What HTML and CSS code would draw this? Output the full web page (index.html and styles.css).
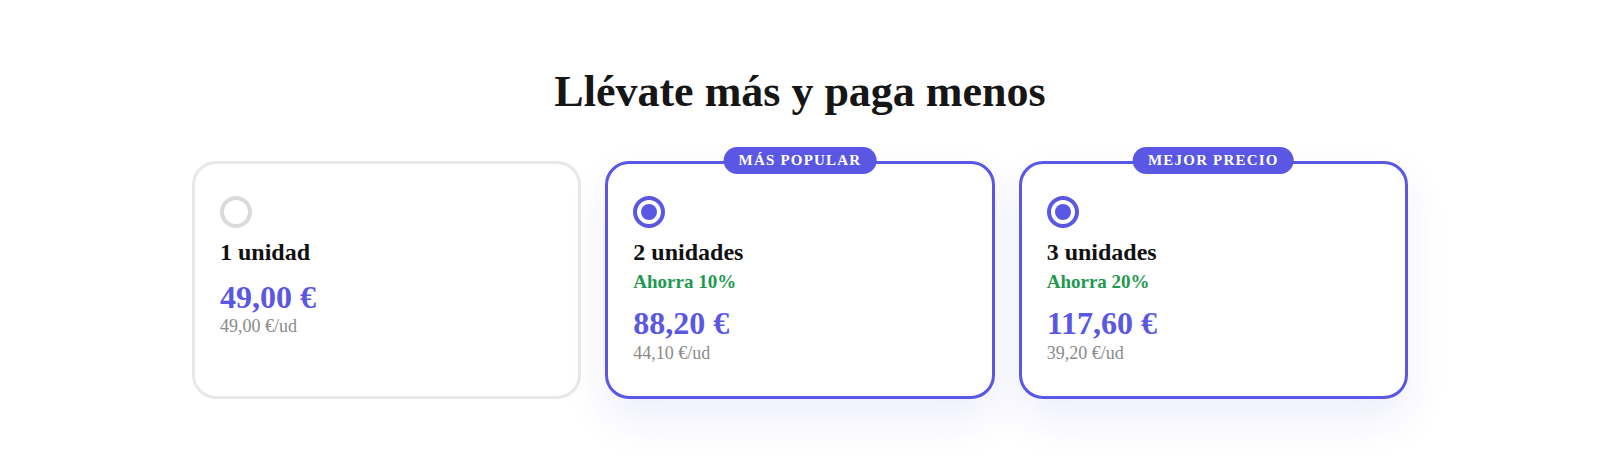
FILE: index.html
```html
<!DOCTYPE html>
<html>
    <head>
        <meta charset="utf-8">
        <meta name="viewport" content="width=device-width, initial-scale=1.0">
        <link rel="stylesheet" href="styles.css">
    </head>
    <body>
        <main class="bundles">
            <h1 class="title">Llévate más y paga menos</h1>
            <div class="options">
                <div class="option">
                    <span class="radio"></span>
                    <p class="qty">1 unidad</p>
                    <p class="price">49,00 €</p>
                    <p class="unit">49,00 €/ud</p>
                </div>
                <div class="option selected">
                    <span class="badge">Más popular</span>
                    <span class="radio"></span>
                    <p class="qty">2 unidades</p>
                    <p class="save">Ahorra 10%</p>
                    <p class="price">88,20 €</p>
                    <p class="unit">44,10 €/ud</p>
                </div>
                <div class="option selected">
                    <span class="badge">Mejor precio</span>
                    <span class="radio"></span>
                    <p class="qty">3 unidades</p>
                    <p class="save">Ahorra 20%</p>
                    <p class="price">117,60 €</p>
                    <p class="unit">39,20 €/ud</p>
                </div>
            </div>
        </main>
    </body>
</html>
```

FILE: styles.css
```css
body {
    margin: 0;
    font-family: "Liberation Serif", "Times New Roman", serif;
    background: #fff;
    color: #111;
}

.bundles {
    padding: 66px 0 70px;
}

.title {
    margin: 0 0 42px;
    text-align: center;
    font-size: 44px;
    line-height: 1.2;
    font-weight: bold;
    color: #161616;
}

.options {
    width: 1216px;
    margin: 0 auto;
    display: grid;
    grid-template-columns: repeat(3, 1fr);
    gap: 24px;
}

.option {
    position: relative;
    padding: 32px 25px;
    border: 3px solid #e8e8e8;
    border-radius: 24px;
    background: #fff;
}

.option.selected {
    border-color: #5a57e4;
    box-shadow: 0 20px 40px rgba(90, 87, 228, 0.1);
}

.badge {
    position: absolute;
    top: -17px;
    left: 50%;
    transform: translateX(-50%);
    padding: 4px 15px;
    border-radius: 999px;
    background: #5a57e4;
    color: #fff;
    font-size: 15px;
    line-height: 19px;
    font-weight: bold;
    text-transform: uppercase;
    letter-spacing: 1.2px;
    white-space: nowrap;
}

.radio {
    display: block;
    box-sizing: border-box;
    width: 32px;
    height: 32px;
    margin-bottom: 10px;
    border: 4px solid #dadada;
    border-radius: 50%;
    position: relative;
}

.selected .radio {
    border-color: #5a57e4;
}

.selected .radio::after {
    content: "";
    position: absolute;
    top: 50%;
    left: 50%;
    width: 16px;
    height: 16px;
    margin: -8px 0 0 -8px;
    border-radius: 50%;
    background: #5a57e4;
}

.option p {
    margin: 0;
    line-height: 1.2;
}

.qty {
    font-size: 24px;
    font-weight: bold;
}

.save {
    margin-top: 4px !important;
    font-size: 19px;
    font-weight: bold;
    color: #1e9a50;
}

.price {
    margin-top: 11px !important;
    font-size: 32px;
    font-weight: bold;
    color: #5a57e4;
}

.unit {
    font-size: 18px;
    color: #8a8a8a;
}
```
